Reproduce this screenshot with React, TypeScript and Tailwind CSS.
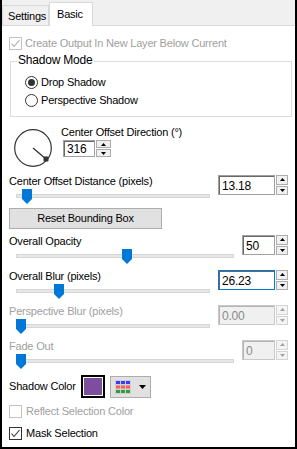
import React from 'react';

// small down/up triangle used by the spin buttons
function Tri({ up, color }: { up?: boolean; color: string }) {
  return (
    <svg width="5" height="3" viewBox="0 0 5 3">
      <polygon points={up ? '2.5,0 5,3 0,3' : '0,0 5,0 2.5,3'} fill={color} />
    </svg>
  );
}

type SpinState = 'normal' | 'focused' | 'disabled';

function Spinner({ value, wide, state = 'normal', small }: { value: string; wide?: boolean; state?: SpinState; small?: boolean }) {
  const disabled = state === 'disabled';
  const frame =
    state === 'focused'
      ? 'border border-[#0078d7]'
      : disabled
      ? 'border border-[#c8c8c8]'
      : 'border border-[#a0a0a0]';
  const inner = disabled ? 'border-t border-l border-[#b4b4b4] bg-[#f0f0f0] text-[#8a8a8a]' : 'border-t border-l border-[#696969] bg-white text-black';
  return (
    <div className={`flex gap-[1px] ${small ? 'h-[17px]' : 'h-[20px]'}`}>
      <div className={`${frame} ${wide ? 'w-[57px]' : small ? 'w-[32px]' : 'w-[33px]'} h-full`}>
        <div className={`${inner} h-full flex items-center pl-[2px] text-[12px] leading-none`}>{value}</div>
      </div>
      <div className={`flex flex-col gap-[1px] h-full ${small ? 'w-[15px]' : 'w-[12px]'}`}>
        <div className={`flex-1 flex items-center justify-center border ${disabled ? 'border-[#d4d4d4] bg-[#f4f4f4]' : 'border-[#adadad] bg-[#f0f0f0]'}`}>
          <Tri up color={disabled ? '#a0a0a0' : '#000'} />
        </div>
        <div className={`flex-1 flex items-center justify-center border ${disabled ? 'border-[#d4d4d4] bg-[#f4f4f4]' : 'border-[#adadad] bg-[#f0f0f0]'}`}>
          <Tri color={disabled ? '#a0a0a0' : '#000'} />
        </div>
      </div>
    </div>
  );
}

function Slider({ pos }: { pos: number }) {
  return (
    <div className="relative h-[15px] ml-[7px] mr-[8px]">
      <div className="absolute left-0 right-0 top-[5px] h-[4px] bg-[#e7e7e7] border border-[#d6d6d6]" />
      <svg className="absolute top-0" style={{ left: pos }} width="10" height="15" viewBox="0 0 10 15">
        <polygon points="0,0 10,0 10,10 5,15 0,10" fill="#0078d7" />
      </svg>
    </div>
  );
}

function SliderBlock({
  label,
  value,
  pos,
  wide,
  state,
  tall = true,
}: {
  label: string;
  value: string;
  pos: number;
  wide?: boolean;
  state?: SpinState;
  tall?: boolean;
}) {
  return (
    <div className={`flex pl-[7px] pr-[7px] ${tall ? 'h-[35px]' : 'h-[33px]'}`}>
      <div className="flex-1 flex flex-col">
        <div className={`h-[13px] leading-[13px] ${state === 'disabled' ? 'text-[#a0a0a0]' : ''}`}>{label}</div>
        <div className="mt-[1px]">
          <Slider pos={pos} />
        </div>
      </div>
      <Spinner value={value} wide={wide} state={state} />
    </div>
  );
}

function Check({ checked, disabled }: { checked?: boolean; disabled?: boolean }) {
  const c = disabled ? '#a8a8a8' : '#333';
  return (
    <div className={`w-[13px] h-[13px] border bg-white ${disabled ? 'border-[#c4c4c4]' : 'border-[#333]'}`}>
      {checked && (
        <svg width="11" height="11" viewBox="0 0 11 11">
          <polyline points="1.5,5.5 4,8.5 9.5,2" fill="none" stroke={c} strokeWidth="1.1" />
        </svg>
      )}
    </div>
  );
}

function Radio({ checked, label }: { checked?: boolean; label: string }) {
  return (
    <div className="h-[18px] flex items-center gap-[3px]">
      <div className="w-[13px] h-[13px] rounded-full border border-[#333] bg-white flex items-center justify-center">
        {checked && <div className="w-[7px] h-[7px] rounded-full bg-[#333]" />}
      </div>
      <span className="leading-[13px]">{label}</span>
    </div>
  );
}

function Dial() {
  return (
    <svg width="44" height="44" viewBox="0 0 44 44">
      <circle cx="22" cy="22" r="18.3" fill="none" stroke="#333" strokeWidth="1.2" />
      <line x1="22" y1="22" x2="35" y2="33" stroke="#333" strokeWidth="1.3" />
      <rect x="32.5" y="30.5" width="5" height="5" rx="1" fill="#333" />
    </svg>
  );
}

function GridIcon() {
  const cols = [1, 6, 11];
  const rows = [
    { y: 1, c: '#3b3bff' },
    { y: 5.5, c: '#ff5a5a' },
    { y: 10, c: '#2e9e3e' },
  ];
  return (
    <svg width="16" height="14" viewBox="0 0 16 14">
      <rect x="0" y="0" width="16" height="14" fill="#d0d0d0" />
      {rows.map((r) =>
        cols.map((x) => <rect key={`${r.y}-${x}`} x={x} y={r.y} width="4" height="3" fill={r.c} />)
      )}
    </svg>
  );
}

export default function App() {
  return (
    <div className="w-[297px] h-[449px] bg-white border-l-2 border-r-2 border-b-2 border-black flex flex-col overflow-hidden font-['Liberation_Sans',Arial,sans-serif] text-[11px] tracking-[-0.2px] text-black">
      {/* tab strip */}
      <div className="h-[26px] shrink-0 bg-[#f0f0f0] border-b border-[#d9d9d9] flex items-end">
        <div className="w-[47px] h-[20px] bg-[#f0f0f0] border-l border-t border-r border-[#d9d9d9] pl-[5px] pt-[4px] leading-[13px]">
          Settings
        </div>
        <div className="relative w-[44px] h-[24px] -mb-[1px] bg-white border-l border-t border-r border-[#d9d9d9] pl-[7px] pt-[5px] leading-[13px]">
          Basic
        </div>
      </div>

      {/* panel */}
      <div className="flex-1 flex flex-col">
        <div className="mt-[11px] pl-[7px] flex items-center gap-[3px] h-[13px]">
          <Check checked disabled />
          <span className="text-[#a0a0a0] leading-[13px]">Create Output In New Layer Below Current</span>
        </div>

        <div className="relative mt-[11px] ml-[8px] w-[282px] h-[56px] border border-[#dcdcdc] pt-[11px] pl-[14px]">
          <span className="absolute -top-[8px] left-[6px] px-[1px] bg-white leading-[13px] text-[12px]">Shadow Mode</span>
          <Radio checked label="Drop Shadow" />
          <Radio label="Perspective Shadow" />
        </div>

        <div className="mt-[9px] pl-[9px] flex h-[44px]">
          <Dial />
          <div className="ml-[6px] flex flex-col">
            <div className="h-[13px] leading-[13px]">Center Offset Direction (°)</div>
            <div className="mt-[1px] ml-[2px]">
              <Spinner value="316" small />
            </div>
          </div>
        </div>

        <div className="mt-[5px]">
          <SliderBlock label="Center Offset Distance (pixels)" value="13.18" pos={6} wide tall={false} />
        </div>

        <div className="ml-[7px] w-[153px] h-[21px] bg-[#e1e1e1] border border-[#adadad] flex items-center justify-center leading-[13px]">
          Reset Bounding Box
        </div>

        <div className="mt-[6px] flex flex-col">
          <SliderBlock label="Overall Opacity" value="50" pos={106} />
          <SliderBlock label="Overall Blur (pixels)" value="26.23" pos={38} wide state="focused" />
          <SliderBlock label="Perspective Blur (pixels)" value="0.00" pos={0} wide state="disabled" />
          <SliderBlock label="Fade Out" value="0" pos={0} state="disabled" />
        </div>

        <div className="pl-[7px] h-[23px] flex items-center">
          <span className="w-[72px] leading-[13px]">Shadow Color</span>
          <div className="w-[24px] h-[23px] border-2 border-black bg-white p-[1px]">
            <div className="w-full h-full bg-[#7e4e9e]" />
          </div>
          <div className="ml-[5px] w-[41px] h-[22px] bg-[#e1e1e1] border border-[#adadad] flex items-center pl-[4px] gap-[8px]">
            <GridIcon />
            <svg width="7" height="4" viewBox="0 0 7 4">
              <polygon points="0,0 7,0 3.5,4" fill="#000" />
            </svg>
          </div>
        </div>

        <div className="mt-[7px] pl-[7px] flex items-center gap-[4px] h-[13px]">
          <Check disabled />
          <span className="text-[#a0a0a0] leading-[13px]">Reflect Selection Color</span>
        </div>

        <div className="mt-[9px] pl-[7px] flex items-center gap-[4px] h-[13px]">
          <Check checked />
          <span className="leading-[13px]">Mask Selection</span>
        </div>
      </div>
    </div>
  );
}
